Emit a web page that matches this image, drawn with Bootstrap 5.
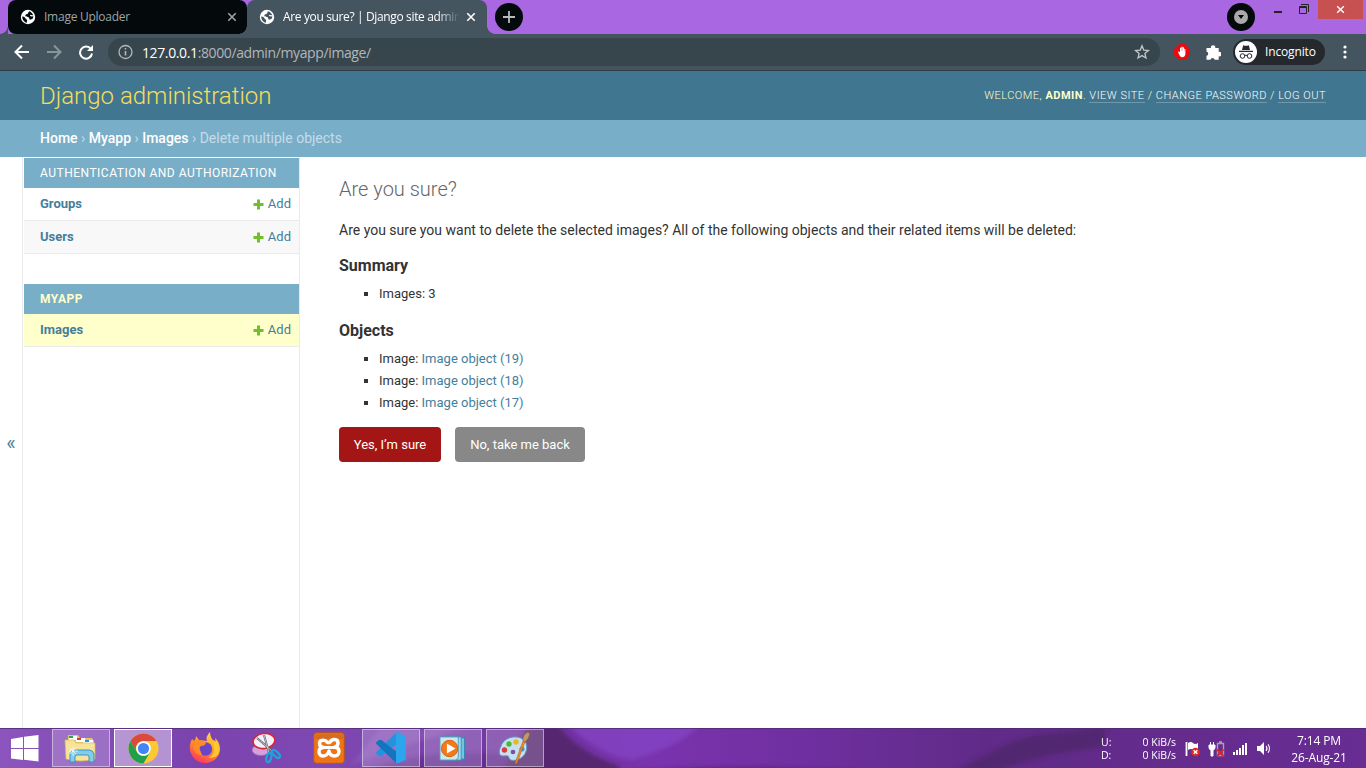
<!DOCTYPE html>
<html lang="en">
<head>
<meta charset="utf-8">
<title>Are you sure? | Django site admin</title>
<link rel="stylesheet" href="https://cdn.jsdelivr.net/npm/bootstrap@5.3.0/dist/css/bootstrap.min.css">
<style>
body{width:1366px;height:768px;overflow:hidden;font-family:Roboto,sans-serif;font-size:14px;line-height:1.5;color:#333;background:#fff}
svg{display:block;flex:none}
a{text-decoration:none;color:#447e9b}
.ui{font-family:"Open Sans","Noto Sans",sans-serif}
/* browser chrome */
.tabstrip{height:34px;background:#a968e1;padding-left:8px}
.tab{height:34px;width:240px;padding:0 11px 0 12px;font-size:12px;border-radius:8px 8px 0 0}
.tab-idle{width:239px;padding-right:10px;background:#04090c;color:#9fa4a7;border-radius:8px}
.tab-live{background:#45555f;color:#fff}
.tab-live::before,.tab-live::after,.tab-idle::before{content:"";position:absolute;bottom:0;width:8px;height:8px;background:radial-gradient(circle at 0 0,transparent 7.5px,#45555f 8px)}
.tab-live::before{left:-8px}
.tab-live::after{right:-8px;background:radial-gradient(circle at 100% 0,transparent 7.5px,#45555f 8px)}
.tab-idle::before{left:-8px;background:radial-gradient(circle at 0 0,transparent 7.5px,#45555f 8px)}
.tab-title{width:177px;margin-left:8px;margin-right:-2px;white-space:nowrap;overflow:hidden}
.tab-live .tab-title{-webkit-mask-image:linear-gradient(90deg,#000 154px,transparent 177px)}
.title-a{letter-spacing:-.25px}.title-b{letter-spacing:-.36px}
.newtab{margin-left:8px}
.winbtns{height:34px;margin-right:3px}
.close-btn{width:45px;height:19px;background:#c75050}
.toolbar{height:37px;background:#45555f;border-bottom:1px solid #303d45;padding:0 0 0 14px}
.omnibox{width:1052px;height:28px;margin-left:14px;border-radius:14px;background:#37454d;color:#b1b7ba;font-size:14px;padding:0 10px}
.omnibox b{font-weight:400;color:#fff}
.url{margin-left:9px;letter-spacing:-.38px}
.incog{width:92px;height:26px;border-radius:13px;background:#25282c;color:#fff;font-size:12px;margin-left:12px;padding-left:2px}
/* admin page */
.site-head{height:49px;background:#417690;padding:0 40px;color:#ffc}
.site-head h1{font-size:24px;font-weight:300;color:#f5dd5d;line-height:1}
.user-tools{font-size:11px;letter-spacing:.5px;text-transform:uppercase;font-weight:300;line-height:15px}
.user-tools strong{font-weight:700}
.user-tools a{color:#fff;border-bottom:1px solid rgba(255,255,255,.25)}
.crumbs{height:37px;background:#79aec8;color:#c4dce8;padding:0 40px;white-space:pre}
.crumbs a{color:#fff;font-weight:500}
.page{height:571px}
.rail{width:23px;border-right:1px solid #eaeaea;color:#447e9b;font-size:20px}
.side{width:277px;padding:1px 0 0 1px;border-right:1px solid #eaeaea;font-size:13px}
.cap{height:30px;background:#79aec8;color:#fff;font-size:12px;font-weight:400;letter-spacing:.5px;padding:0 16px}
.cap-now{color:#ffc;font-weight:700}
.model{height:33px;border-bottom:1px solid #eaeaea;padding:0 8px 0 16px;line-height:20px}
.model b{font-weight:700}
.model a{color:#447e9b}
.module{margin-bottom:30px}
.main-col{padding:20px 0 0 39px}
.main-col h2{font-size:20px;font-weight:300;color:#666;line-height:24px;margin:0 0 19px}
.main-col p{line-height:20px;margin:0 0 16px}
.main-col h3{font-size:16px;font-weight:700;line-height:20px;margin:0 0 7px}
.main-col ul{list-style:square;font-size:13px;line-height:22px;padding-left:40px;margin:0}
.act{height:35px;border:0;border-radius:4px;font-size:13px;padding:0;color:#fff;font-weight:400}
.act:hover{color:#fff}
.act-yes{width:102px;background:#a41515}
.act-no{width:130px;background:#888}
/* desktop taskbar */
.taskbar{height:40px;color:#fff}
.backdrop{position:absolute;left:0;top:0;z-index:0}
.slot{width:58px;height:38px;margin:1px 4px 0 0;position:relative}
.open-slot{border:1px solid rgba(255,255,255,.45);background:rgba(255,255,255,.2)}
.front-slot{border:1px solid #fff;background:rgba(255,255,255,.42)}
.startbtn{width:52px;position:relative;padding-right:3px}
.tray{position:relative;font-size:10.5px;line-height:13px}
.clock{font-size:12px;line-height:17px;width:76px;text-align:center;margin:0 9px;letter-spacing:-.12px;padding-top:1px}
</style>
</head>
<body class="d-flex flex-column">
<svg width="0" height="0" class="position-absolute"><defs>
<symbol id="globe" viewBox="0 0 16 16"><circle cx="8" cy="8" r="7.200" fill="#fff"/><path d="M9.500 2.300C8 2.500 8.800 4.600 7.300 5 5.800 5.300 5 6.200 5.500 7.300c.8 1 2.300.2 3.200 1 .8.800.2 2 1.300 2.300 1.200.2 1.500-.7 2.700-.8 1.300-2.300.5-5.600-3.200-7.500z" fill="var(--land)"/><path d="M2.200 7.600c1.600-.3 2.700.8 3.300 1.800.6.900 1.800.9 1.700 2.100 0 .9-.7 1.300-.4 2.400C4 13.300 2.100 10.800 2.200 7.600z" fill="var(--land)"/><path d="M10.200 6.300q1.500.9 3.400.2" stroke="#fff" stroke-width="1.300" fill="none"/></symbol>
<symbol id="x" viewBox="0 0 10 10"><path d="M1.300 1.300l7.400 7.400M8.700 1.300L1.300 8.700" stroke="currentColor" stroke-width="1.600"/></symbol>
<symbol id="plus" viewBox="0 0 11 11"><path d="M4 .5h3V4h3.500v3H7v3.500H4V7H.5V4H4z" fill="#70bf2b"/></symbol>
</defs></svg>

<div class="tabstrip ui d-flex align-items-start">
  <div class="tab tab-idle position-relative d-flex align-items-center">
    <svg width="16" height="16" style="--land:#04090c"><use href="#globe"/></svg>
    <span class="tab-title title-a">Image Uploader</span>
    <svg class="ms-auto" width="10" height="10"><use href="#x"/></svg>
  </div>
  <div class="tab tab-live position-relative d-flex align-items-center">
    <svg width="16" height="16" style="--land:#45555f"><use href="#globe"/></svg>
    <span class="tab-title title-b">Are you sure? | Django site admin</span>
    <svg class="ms-auto" width="10" height="10"><use href="#x"/></svg>
  </div>
  <svg class="newtab" width="28" height="34"><circle cx="14" cy="17" r="14" fill="#04090c"/><path d="M8 17h12M14 11v12" stroke="#b8bcbd" stroke-width="1.800"/></svg>
  <div class="winbtns d-flex ms-auto">
    <svg width="91" height="34"><circle cx="14" cy="17" r="14" fill="#04090c"/><circle cx="14" cy="17" r="7" fill="#aaa"/><path d="M11 15h6L14 19z" fill="#04090c"/><path d="M47 12h8" stroke="#222" stroke-width="2"/><path d="M72.500 6.500h7v7h-7zM72.500 7.500h7M74 4.500h7.500V12" stroke="#222" fill="none"/></svg>
    <div class="close-btn d-flex align-items-center justify-content-center text-white"><svg width="9" height="9"><use href="#x"/></svg></div>
  </div>
</div>

<div class="toolbar ui d-flex align-items-center">
  <svg width="80" height="16" fill="none" stroke-width="2"><path d="M15 8H2M8 1.500L1.500 8 8 14.500" stroke="#fff"/><path d="M33 8h13M40 1.500L46.500 8 40 14.500" stroke="#8b969b"/><path d="M77 5.200A6 6 0 1 0 78 9.500" stroke="#fff"/><path d="M79 1v6h-6z" fill="#fff"/></svg>
  <div class="omnibox d-flex align-items-center">
    <svg width="15" height="16" fill="none" stroke="#b1b7ba"><circle cx="7.500" cy="8" r="6.500" stroke-width="1.300"/><path d="M7.500 7v4.500M7.500 4v1.600" stroke-width="1.600"/></svg>
    <span class="url"><b>127.0.0.1</b>:8000/admin/myapp/image/</span>
    <svg class="ms-auto" width="16" height="16" viewBox="0 0 16 16"><path d="M8 1.800l1.750 4.300 4.650.4-3.500 3 1.050 4.500L8 11.600 4.050 14l1.050-4.500-3.500-3 4.650-.4z" fill="none" stroke="#c2c7c9" stroke-width="1.300"/></svg>
  </div>
  <svg width="47" height="18" style="margin-left:14px"><path d="M5.200 1h5.600L16 5.900v5.800L11.300 17H4.700L0 12.100V5.900z" fill="#e80c12"/><path d="M4 8.700q1-.8 2 .8V5q.6-.8 1.200 0v3h.2V4q.7-.8 1.300 0v4h.2V4.600q.7-.7 1.200 0v3.900h.2V6q.7-.5 1.100.2v5q-.5 3-3.300 3.100-2.500-.3-4.100-5.600z" fill="#fff"/><path d="M33.500 5h3.500a2.200 2.200 0 1 1 4.200 0h3.500v4a2.300 2.300 0 1 1 0 4.300v3.500h-4a2.200 2.200 0 0 0-4.300 0h-3.900v-4a2.200 2.200 0 0 0 0-4.300V5z" fill="#fff"/></svg>
  <div class="incog d-flex align-items-center">
    <svg width="22" height="22"><circle cx="11" cy="11" r="11" fill="#fff"/><path d="M7 9l1.200-4.800q3 1 5.600 0L15 9zM4 9.800h14v1.200H4z" fill="#25282c"/><circle cx="7.500" cy="15" r="2.300" fill="none" stroke="#25282c"/><circle cx="14.500" cy="15" r="2.300" fill="none" stroke="#25282c"/><path d="M9.800 14.500q1.200-.6 2.400 0" fill="none" stroke="#25282c"/></svg>
    <span style="margin-left:8px;letter-spacing:-.15px">Incognito</span>
  </div>
  <svg width="6" height="16" fill="#fff" style="margin-left:16.500px"><circle cx="3" cy="3" r="1.600"/><circle cx="3" cy="8" r="1.600"/><circle cx="3" cy="13" r="1.600"/></svg>
</div>

<header class="site-head d-flex align-items-center justify-content-between">
  <h1 class="m-0">Django administration</h1>
  <div class="user-tools">Welcome, <strong>admin</strong>. <a href="#">View site</a> / <a href="#">Change password</a> / <a href="#">Log out</a></div>
</header>
<nav class="crumbs d-flex align-items-center"><span><a href="#">Home</a> › <a href="#">Myapp</a> › <a href="#">Images</a> › Delete multiple objects</span></nav>

<div class="page d-flex">
  <div class="rail d-flex align-items-center justify-content-center">«</div>
  <aside class="side">
    <div class="module">
      <div class="cap d-flex align-items-center">AUTHENTICATION AND AUTHORIZATION</div>
      <div class="model d-flex align-items-center justify-content-between"><a href="#"><b>Groups</b></a><a href="#" class="d-flex align-items-center"><svg width="11" height="11" class="me-1"><use href="#plus"/></svg>Add</a></div>
      <div class="model d-flex align-items-center justify-content-between" style="background:#f8f8f8"><a href="#"><b>Users</b></a><a href="#" class="d-flex align-items-center"><svg width="11" height="11" class="me-1"><use href="#plus"/></svg>Add</a></div>
    </div>
    <div class="module">
      <div class="cap cap-now d-flex align-items-center">MYAPP</div>
      <div class="model d-flex align-items-center justify-content-between" style="background:#ffc"><a href="#"><b>Images</b></a><a href="#" class="d-flex align-items-center"><svg width="11" height="11" class="me-1"><use href="#plus"/></svg>Add</a></div>
    </div>
  </aside>
  <main class="main-col flex-grow-1">
    <h2>Are you sure?</h2>
    <p>Are you sure you want to delete the selected images? All of the following objects and their related items will be deleted:</p>
    <h3>Summary</h3>
    <ul><li>Images: 3</li></ul>
    <h3 style="margin-top:16px">Objects</h3>
    <ul>
      <li>Image: <a href="#">Image object (19)</a></li>
      <li>Image: <a href="#">Image object (18)</a></li>
      <li>Image: <a href="#">Image object (17)</a></li>
    </ul>
    <div class="d-flex" style="margin-top:13px;gap:14px">
      <button class="btn act act-yes">Yes, I’m sure</button>
      <a href="#" class="btn act act-no d-flex align-items-center justify-content-center">No, take me back</a>
    </div>
  </main>
</div>

<footer class="taskbar ui position-relative d-flex">
  <svg class="backdrop" width="1366" height="40">
    <defs>
      <linearGradient id="sky"><stop offset="0" stop-color="#8c55bd"/><stop offset=".14" stop-color="#7b43ae"/><stop offset=".24" stop-color="#7e48b2"/><stop offset=".28" stop-color="#7c45ae"/><stop offset=".4" stop-color="#6f329f"/><stop offset=".48" stop-color="#7a33ae"/><stop offset=".6" stop-color="#6e2f9e"/><stop offset=".72" stop-color="#602b88"/><stop offset="1" stop-color="#682c92"/></linearGradient>
      <filter id="soft" x="-10%" y="-30%" width="120%" height="160%"><feGaussianBlur stdDeviation="2"/></filter>
    </defs>
    <rect width="1366" height="40" fill="url(#sky)"/>
    <g filter="url(#soft)">
      <path d="M350 38Q390 22 430 10L470 0H380z" fill="#9667c4" opacity=".4"/>
      <path d="M360 45Q430 15 545 30V45z" fill="#58267e" opacity=".5"/>
      <path d="M530-6h26q20 30 64 44v8H500z" fill="#57286f"/>
      <path d="M568-4q28 30 64 36 54-16 70-38z" fill="#8342c2" opacity=".85"/>
      <path d="M955 44q50-30 80-37l70-8v20q-70 8-110 25z" fill="#50286a" opacity=".8"/>
      <path d="M620 44q120-8 240 0z" fill="#4d2370"/>
    </g>
    <path d="M0 .5h1366" stroke="#512a72" opacity=".8"/>
  </svg>
  <div class="startbtn d-flex align-items-center justify-content-center"><svg width="28" height="27"><path d="M0 4l12-2v11H0zM13 1.800L27.500 0v13H13zM0 14h12v11L0 23.500zM13 14h14.500v12.500L13 24.800z" fill="#fff"/></svg></div>
  <div class="slot open-slot d-flex align-items-center justify-content-center">
    <svg width="34" height="32" viewBox="0 0 34 32"><path d="M4 3h10l2 3h12l2 3v18H3z" fill="#e1c568"/><path d="M5 4h8v4H5zM12 6h9v4h-9zM19 8h10v4H19z" fill="#fff"/><path d="M5 4h4v2H5z" fill="#22a845"/><path d="M13 6h4v2h-4z" fill="#d83a2e"/><path d="M21 8h4v2h-4z" fill="#2d91dd"/><path d="M1 8h9l2 3h19v16q-15 4-29 0z" fill="#f7e49a" stroke="#d9ba5c" stroke-width=".7"/><path d="M6 30v-8q1-4 5-4h14q4 0 5 4v8h-5v-5q0-2-2-2H13q-2 0-2 2v5z" fill="#82cdea" stroke="#368cba" stroke-width=".9"/><path d="M9 15v9M5 19h9M6 16l6 6M12 16l-6 6" stroke="#fff" stroke-width=".7"/></svg>
  </div>
  <div class="slot front-slot d-flex align-items-center justify-content-center">
    <svg width="31" height="31" viewBox="0 0 32 32"><circle cx="16" cy="16" r="15.500" fill="#fcc934"/><path d="M2.600 8.250A15.500 15.500 0 0 1 29.400 8.250H16A7.750 7.750 0 0 0 9.300 19.900z" fill="#dc4a3d"/><path d="M2.600 8.250A15.500 15.500 0 0 0 16 31.500L22.700 19.900A7.750 7.750 0 0 1 9.300 19.900z" fill="#20a04a"/><circle cx="16" cy="16" r="7.500" fill="#fff"/><circle cx="16" cy="16" r="5.800" fill="#4285f4"/></svg>
  </div>
  <div class="slot d-flex align-items-center justify-content-center">
    <svg width="32" height="32" viewBox="0 0 32 32"><defs><linearGradient id="fire" x1=".8" y1="0" x2=".3" y2="1"><stop stop-color="#ffe24a"/><stop offset=".5" stop-color="#ff9626"/><stop offset="1" stop-color="#ff3360"/></linearGradient></defs><path d="M21 0q-5 5-3 9L10 8 7 4q0 3-2 5L3 7Q0 13 1 18c2 9 8 13 15 13 9 0 15-7 15-14 0-5-2-8-5-11l1 5q-6-4-6-11z" fill="url(#fire)"/><circle cx="16.500" cy="17" r="6.700" fill="#6945c8"/><path d="M4 9q8-3 13 2-1 3-5 3-2 1-1 4l2 5Q4 24 4 9z" fill="#ff8a28"/><path d="M18 8q8 2 7 11-1 5-6 7 13 0 11-11-2-6-6-7l1 5z" fill="#ffc82e"/></svg>
  </div>
  <div class="slot d-flex align-items-center justify-content-center">
    <svg width="32" height="34" viewBox="0 0 32 34"><ellipse cx="10" cy="19" rx="9" ry="5.500" fill="#d6a0dc" stroke="#9b6bb5"/><ellipse cx="13" cy="10" rx="11" ry="7.500" transform="rotate(-8 13 10)" fill="#f5f0f8" stroke="#d82636" stroke-width="1.600"/><path d="M6 7l15 13M13 4l5 18" stroke="#555d68" stroke-width="2"/><path d="M6 7l15 13M13 4l5 18" stroke="#d7dde2" stroke-width=".8"/><ellipse cx="18" cy="26.500" rx="2.300" ry="4.800" transform="rotate(15 18 26)" fill="none" stroke="#22a1db" stroke-width="2.300"/><ellipse cx="25" cy="23" rx="2.300" ry="5" transform="rotate(-45 25 23)" fill="none" stroke="#22a1db" stroke-width="2.300"/></svg>
  </div>
  <div class="slot d-flex align-items-center justify-content-center">
    <svg width="32" height="32" viewBox="0 0 32 32"><rect x=".7" y=".7" width="30.600" height="30.600" rx="3" fill="#ee7415" stroke="#b75718"/><path d="M2 3q14-2 28 0v4H2z" fill="#c7682d" opacity=".6"/><path d="M14.500 10.500C12 7 6.500 7.500 6.500 11.500c0 2 1.500 3.500 4 4-3 0-4.500 2-4.500 4.500 0 5 7.500 6 10-1 1 6.500 10 6.500 10 .5 0-2.500-1.500-4-4-4.500 2-.5 3-2 3-4 0-4.500-6.500-4.500-8-.5z" fill="none" stroke="#fff" stroke-width="3.400" stroke-linejoin="round"/><path d="M10.500 15.500h12" stroke="#fff" stroke-width="3"/></svg>
  </div>
  <div class="slot open-slot d-flex align-items-center justify-content-center">
    <svg width="32" height="32" viewBox="0 0 32 32" style="margin-right:2px"><path d="M23 0L3 19.500q-2 1.500 0 3l2 1.500q1 .7 2.500 0L24 11z" fill="#2492de"/><path d="M23 32L3 12.500q-2-1.500 0-3L5 8q1-.7 2.500 0L24 21z" fill="#1474bd"/><path d="M23 .3L31.800 4v24L23 31.700q-1.200 0-1-2V2.300q-.2-2 1-2z" fill="#2ba5ec"/></svg>
  </div>
  <div class="slot open-slot d-flex align-items-center justify-content-center">
    <svg width="27" height="27" viewBox="0 0 28 28" style="margin-right:2px"><path d="M8 3h18.500v22H8z" fill="#72c4e5" stroke="#3485b3"/><path d="M5 2h18v24H5z" fill="#a5dced" stroke="#3c8fba"/><path d="M1 2h19v22l-3 2H1z" fill="#c8e9f2" stroke="#559ab8"/><circle cx="11" cy="14" r="8.500" fill="#f27a1a" stroke="#d65e0b"/><path d="M8.200 8.800L17 14l-8.800 5.200z" fill="#fff"/></svg>
  </div>
  <div class="slot open-slot d-flex align-items-center justify-content-center">
    <svg width="34" height="34" viewBox="0 0 34 34" style="margin-right:2px"><path d="M4 15C7 6 20 3 27 9c5 5 3 16-5 19-4 2-9 2-10-1-.5-3-3-2-6-2-4 0-5-4-2-10z" fill="#c5e1f1" stroke="#6094be"/><circle cx="7.500" cy="19" r="2.700" fill="#dc3c36"/><circle cx="12" cy="13" r="2.700" fill="#50b536"/><circle cx="19" cy="11" r="2.700" fill="#efb51f"/><circle cx="25" cy="18" r="2.500" fill="#4194dc"/><circle cx="16" cy="21" r="2.300" fill="#7650a3"/><path d="M18 32l8-22 2 1-8 21-2 1z" fill="#f08a27" stroke="#a85a1e" stroke-width=".5"/><path d="M26 10q-1-6 5-9 1 2 2 1-1 6-5 9z" fill="#c49667" stroke="#8a6037" stroke-width=".6"/></svg>
  </div>
  <div class="tray ms-auto d-flex align-items-center">
    <div style="width:38px;padding-top:2px">U:<br>D:</div>
    <div style="width:37px;padding-top:2px;white-space:nowrap" class="text-end">0 KiB/s<br>0 KiB/s</div>
    <svg width="88" height="20" style="margin:1px 0 0 8px">
      <path d="M2.500 3v14" stroke="#fff" stroke-width="1.800"/><path d="M4 4q3-2 5 0t5 0v7q-3 2-5 0t-5 0z" fill="#fff"/><circle cx="11.500" cy="13" r="4.300" fill="#e02b22"/><path d="M9.700 11.200l3.600 3.600M13.300 11.200l-3.600 3.600" stroke="#fff" stroke-width="1.400"/>
      <path d="M25 6h6v2.500q0 2-2 2.500v6h-2v-6Q25 10.500 25 8.500zM26.500 3v3M29.500 3v3" fill="#fff" stroke="#fff"/><path d="M33.500 4.500h6v12h-6zM35 3h3" fill="none" stroke="#aaa1b0" stroke-width="1.400"/><path d="M33 10.500l6.500 6.500M39.500 10.500L33 17" stroke="#e5251d" stroke-width="2"/>
      <path d="M49 13h2v3h-2zM52 11h2v5h-2zM55 9h2v7h-2zM58 6h2v10h-2zM61 4h2v12h-2z" fill="#fff"/>
      <path d="M73 7h3l4-4v13l-4-4h-3z" fill="#fff"/><path d="M82 7q2 2.500 0 5M84 5.300q3 4 0 8.400" fill="none" stroke="#fff" stroke-width="1.100"/>
    </svg>
    <div class="clock">7:14 PM<br>26-Aug-21</div>
  </div>
</footer>
<script src="https://cdn.jsdelivr.net/npm/bootstrap@5.3.0/dist/js/bootstrap.bundle.min.js"></script>
</body>
</html>
